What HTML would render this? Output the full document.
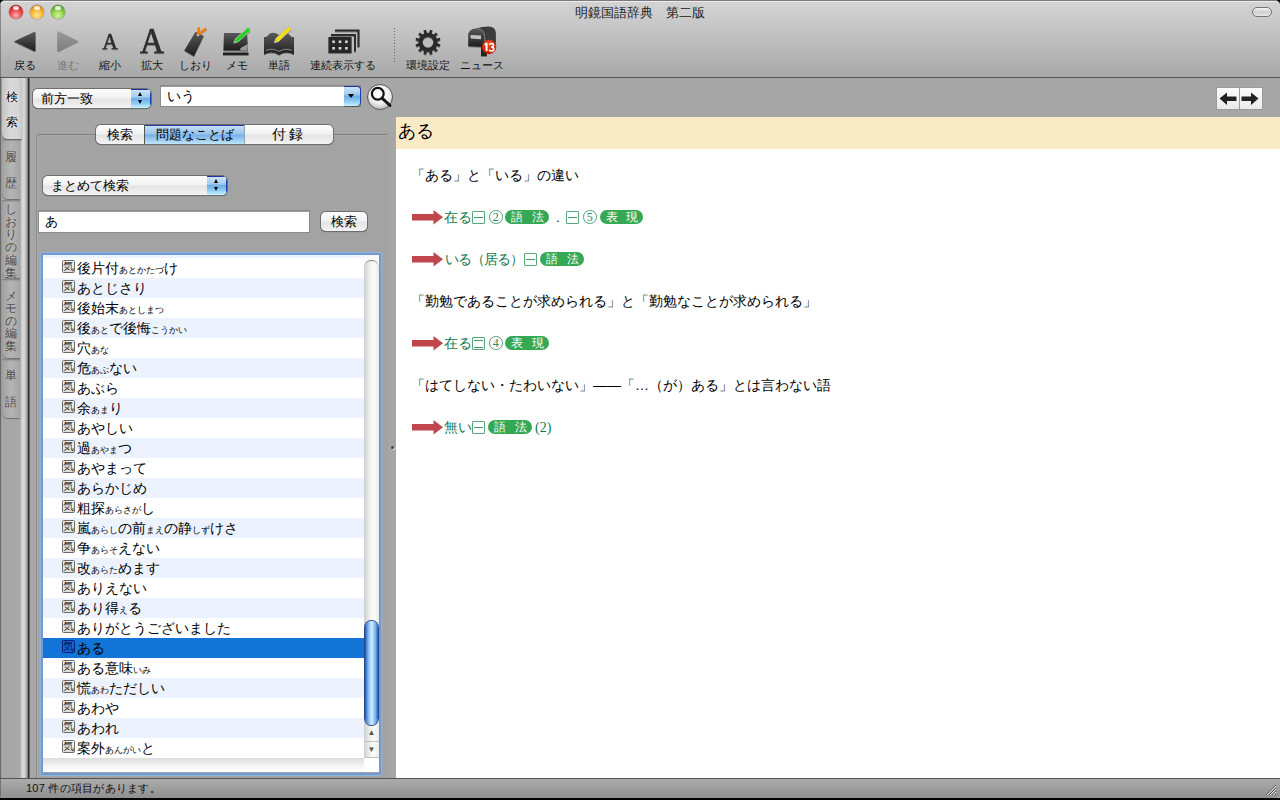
<!DOCTYPE html>
<html><head><meta charset="utf-8">
<style>
*{margin:0;padding:0;box-sizing:border-box}
html,body{width:1280px;height:800px;overflow:hidden;background:#000}
body{font-family:"Liberation Sans",sans-serif;position:relative;color:#000}
.a{position:absolute}
#win{position:absolute;left:0;top:0;width:1280px;height:798px;background:#a6a6a6;border-radius:5px 5px 0 0;overflow:hidden}
#tb{position:absolute;left:0;top:0;width:1280px;height:78px;background:linear-gradient(#d3d3d3,#cdcdcd 18%,#a8a8a8);border-top:1px solid #7c7c7c;border-bottom:1px solid #575757;border-radius:5px 5px 0 0;box-shadow:inset 0 1px 0 #ececec}
.tl{position:absolute;top:5px;width:14px;height:14px;border-radius:50%;box-shadow:0 0 0 0.5px rgba(0,0,0,.35)}
.tl::after{content:"";position:absolute;left:4px;top:1px;width:6px;height:4px;border-radius:50%;background:rgba(255,255,255,.85)}
.lbl{position:absolute;top:57px;font-size:11px;color:#111;white-space:nowrap;text-align:center}
#title{position:absolute;left:0;width:1280px;top:3px;text-align:center;font-size:13px;color:#222}
#vt{position:absolute;left:0;top:78px;width:29px;height:700px;background:linear-gradient(90deg,#8a8a8a,#a6a6a6 2px,#a8a8a8);border-right:1.5px solid #2a2a2a;box-shadow:1px 0 0 #6a6a6a}
.vtab{position:absolute;left:2px;width:18px;background:linear-gradient(90deg,#a2a2a2,#b4b4b4 50%,#a6a6a6);border-radius:0 0 0 6px;box-shadow:0 1px 1px #6e6e6e, inset 0 2px 2px -1px #7a7a7a}
.vtab span{display:block;font-size:12px;color:#4a4a4a;text-align:center;line-height:13px;text-shadow:0 0 2px #c4c4c4}
#status{position:absolute;left:0;top:778px;width:1280px;height:20px;background:linear-gradient(#acacac,#8f8f8f);border-top:1px solid #525252;border-radius:0 0 5px 5px}
#content{position:absolute;left:396px;top:117px;width:884px;height:661px;background:#fff}
#hdr{position:absolute;left:0;top:0;width:884px;height:32px;background:#faebc7}

.pop{position:absolute;height:20px;border-radius:5px;background:linear-gradient(#fdfdfd,#f2f2f2 45%,#e4e4e4 55%,#f4f4f4);box-shadow:0 0 0 1px #6e6e6e, 0 1px 1px #555;overflow:hidden}
.pop .t{position:absolute;left:8px;top:2px;font-size:13px;line-height:16px;color:#000;white-space:nowrap}
.pop .bl{position:absolute;right:0;top:0;width:20px;height:100%;background:linear-gradient(#d2e6f8,#a6cdef 40%,#6eaee6 52%,#8ccaf4 75%,#c9f6ff);box-shadow:inset 0 1px 0 #1f2f9c,inset -1px 0 0 #1f3fa8}
.arr{position:absolute;left:7px;width:0;height:0;border-left:2.5px solid transparent;border-right:2.5px solid transparent}
.fld{position:absolute;background:#fff;box-shadow:inset 0 1px 0 #9a9a9a, 0 0 0 1px #8c8c8c}
.fld .t{position:absolute;left:6px;top:2px;font-size:13px;line-height:16px;white-space:nowrap}
.row{position:absolute;left:0;width:321px;height:20px;background:#fff}
.row.b{background:#edf3fe}
.row.sel{background:#1174d6;color:#fff}
.ic{position:absolute;left:19px;top:2px;width:13px;height:13px;border:1px solid #6a6a6a;border-radius:1.5px;background:linear-gradient(#f6f6f6,#e2e2e2);font-size:11px;line-height:11px;text-align:center;color:#3c3c3c;overflow:hidden}
.row.sel .ic{background:#1466d4;border-color:#06207a;color:#061a60}
.rt{position:absolute;left:34px;top:1px;font-size:14px;line-height:19px;white-space:nowrap;color:#000}
.row.sel .rt{color:#000}
.rt small{font-size:9px}

.ln{position:absolute;left:15px;font-size:14px;line-height:18px;white-space:nowrap;color:#000}
.ar{position:absolute;left:15.5px;width:31px;height:15px}
.gr{position:absolute;font-size:13.5px;line-height:16px;color:#137a4f;white-space:nowrap}
.bx{position:absolute;width:13px;height:13px;border:1px solid #5aa77e;border-radius:1px;margin-top:-1px}
.bx::after{content:"";position:absolute;left:1px;right:1px;top:5px;height:1px;background:#4a9a70}
.bx.b2::after{top:2px;height:6px;background:none;border-top:1px solid #4a9a70;border-bottom:1px solid #4a9a70}
.ci{position:absolute;width:13.5px;height:13.5px;margin-top:-1.5px;border:1px solid #4fa27a;border-radius:50%;font-size:12px;line-height:12px;text-align:center;color:#2e8a5a;font-family:"Liberation Serif",serif}
.pl{position:absolute;height:14px;border-radius:7px;background:#34a853;color:#fff;font-size:12px;line-height:14px;text-align:left}
.pl i{position:absolute;font-style:normal;top:0}
</style></head><body>
<div id="win">
 <div id="tb">
  <div class="tl" style="left:9px;top:4px;background:radial-gradient(circle at 50% 75%,#ffb0b0,#e84848 45%,#c21d1d 80%,#8a1010)"></div>
  <div class="tl" style="left:30px;top:4px;background:radial-gradient(circle at 50% 75%,#ffe890,#f7b73a 45%,#e0871a 80%,#9a5a10)"></div>
  <div class="tl" style="left:51px;top:4px;background:radial-gradient(circle at 50% 75%,#d8f59a,#8ed04a 45%,#4c9e2a 80%,#2a6a14)"></div>
  
  <svg class="a" style="left:0;top:-1px" width="520" height="78" viewBox="0 0 520 78">
   <defs>
    <linearGradient id="gd" x1="0" y1="0" x2="0" y2="1"><stop offset="0" stop-color="#5a5a5a"/><stop offset="1" stop-color="#1e1e1e"/></linearGradient>
    <linearGradient id="gl" x1="0" y1="0" x2="0" y2="1"><stop offset="0" stop-color="#9a9a9a"/><stop offset="1" stop-color="#7d7d7d"/></linearGradient>
    <filter id="sh" x="-20%" y="-20%" width="140%" height="150%"><feDropShadow dx="0" dy="1" stdDeviation="0.6" flood-color="#000" flood-opacity="0.35"/></filter>
   </defs>
   <g filter="url(#sh)">
   <!-- back -->
   <path d="M14 41.5 L34 32 Q35.5 31.4 35.5 33 L35.5 50.2 Q35.5 51.8 34 51.1 Z" fill="url(#gd)"/>
   <!-- forward -->
   <path d="M78.5 41.2 L59 31.4 Q57.4 30.8 57.4 32.4 L57.4 50 Q57.4 51.6 59 50.9 Z" fill="url(#gl)"/>
   <!-- small A -->
   <text x="0" y="0" transform="translate(110 49.4) scale(0.92 1)" font-family="Liberation Serif" font-size="23.6" text-anchor="middle" fill="#2e2e2e" stroke="#2e2e2e" stroke-width="0.5">A</text>
   <!-- big A -->
   <text x="0" y="0" transform="translate(152 53.4) scale(0.93 1)" font-family="Liberation Serif" font-size="35.8" text-anchor="middle" fill="#2e2e2e" stroke="#2e2e2e" stroke-width="0.7">A</text>
   <!-- bookmark -->
   <path d="M195.5 31.7 L203.8 36 L194 56.3 L184.3 50.5 Z" fill="url(#gd)"/>
   <circle cx="198" cy="35" r="1.3" fill="#ccc"/>
   <path d="M198.8 28.2 L198.6 34 L205.4 29" stroke="#f07d0a" stroke-width="2.4" fill="none" stroke-linecap="round" stroke-linejoin="round"/>
   <!-- memo -->
   <path d="M224 33 L247 33 L248 50.5 L223.5 50.5 Z" fill="url(#gd)"/>
   <rect x="223" y="52.5" width="25.5" height="2.5" fill="#222"/>
   <path d="M240.5 48 L248 44 L247.5 50.5 L240 50.5 Z" fill="#9a9a9a"/>
   <path d="M233.8 43 L235.5 38.8 L247.7 27.8 Q249.8 26.5 250.3 30.8 L238.1 41.8 Z" fill="#1fd61f" stroke="#bdbdbd" stroke-width="0.9"/>
   <!-- book -->
   <path d="M264 37 L266.3 37 Q272 29.5 279 35 Q286 29.5 291.7 37 L294 37 L294 54.5 Q286 50.5 279 55 Q272 50.5 264 54.5 Z" fill="url(#gd)"/>
   <path d="M266 50.5 Q272 47.5 279 51.5 Q286 47.5 292 50.5" stroke="#8a8a8a" stroke-width="1" fill="none"/>
   <path d="M274.4 42.7 L275.9 38.5 L288.2 26.8 Q290.5 25.8 291 29.6 L278.7 41.4 Z" fill="#f6e000" stroke="#bdbdbd" stroke-width="0.9"/>
   <!-- cards -->
   <path d="M335 30.5 L358.5 30.5 L358.5 47" stroke="#2a2a2a" stroke-width="2" fill="none"/>
   <path d="M331 35 L355 35 L355 51.5" stroke="#2a2a2a" stroke-width="2" fill="none"/>
   <rect x="328.5" y="37" width="23" height="16" fill="#262626"/>
   <g fill="#d8d8d8"><rect x="332.3" y="40.5" width="2.6" height="2.6"/><rect x="338.7" y="40.5" width="2.6" height="2.6"/><rect x="345.1" y="40.5" width="2.6" height="2.6"/>
   <rect x="332.3" y="47" width="2.6" height="2.6"/><rect x="338.7" y="47" width="2.6" height="2.6"/><rect x="345.1" y="47" width="2.6" height="2.6"/></g>
   <!-- gear -->
   <g transform="translate(428 42.3)">
    <path id="gearp" fill-rule="evenodd" d="M0.00 -9.60 L1.15 -9.53 L1.97 -12.44 L4.52 -11.76 L3.77 -8.83 L4.80 -8.31 L5.76 -7.68 L7.93 -9.79 L9.79 -7.93 L7.68 -5.76 L8.31 -4.80 L8.83 -3.77 L11.76 -4.52 L12.44 -1.97 L9.53 -1.15 L9.60 -0.00 L9.53 1.15 L12.44 1.97 L11.76 4.52 L8.83 3.77 L8.31 4.80 L7.68 5.76 L9.79 7.93 L7.93 9.79 L5.76 7.68 L4.80 8.31 L3.77 8.83 L4.52 11.76 L1.97 12.44 L1.15 9.53 L-0.00 9.60 L-1.15 9.53 L-1.97 12.44 L-4.52 11.76 L-3.77 8.83 L-4.80 8.31 L-5.76 7.68 L-7.93 9.79 L-9.79 7.93 L-7.68 5.76 L-8.31 4.80 L-8.83 3.77 L-11.76 4.52 L-12.44 1.97 L-9.53 1.15 L-9.60 0.00 L-9.53 -1.15 L-12.44 -1.97 L-11.76 -4.52 L-8.83 -3.77 L-8.31 -4.80 L-7.68 -5.76 L-9.79 -7.93 L-7.93 -9.79 L-5.76 -7.68 L-4.80 -8.31 L-3.77 -8.83 L-4.52 -11.76 L-1.97 -12.44 L-1.15 -9.53 Z M5.4 0 A5.4 5.4 0 1 0 -5.4 0 A5.4 5.4 0 1 0 5.4 0 Z" fill="#2c2c2c"/>
   </g>
   <!-- mailbox -->
   <path d="M476 28.6 Q482 26.4 488.5 26.4 Q495.8 26.6 495.8 33 L495.8 45.8 L484 47 Z" fill="#3a3a3a"/>
   <path d="M468.3 35.5 Q468.3 29 476 28.6 Q484.3 28.6 484.3 36.5 L484.3 47 L468.3 46.2 Z" fill="url(#gd)"/>
   <path d="M477.5 28.7 Q484.6 29.5 484.8 36.5 L484.8 47" stroke="#8a8a8a" stroke-width="0.9" fill="none"/>
   <path d="M470.6 35 L481 35.6 L481 39.2 L470.6 38.6 Z" fill="#c4c4c4"/>
   <rect x="481" y="47" width="5.8" height="9" fill="#222"/>
   </g>
   <defs><radialGradient id="bg13" cx="50%" cy="30%" r="70%"><stop offset="0" stop-color="#f2501c"/><stop offset="1" stop-color="#c41a06"/></radialGradient></defs>
   <circle cx="489.1" cy="47" r="7.2" fill="url(#bg13)"/>
   <path d="M484.6 44.9 L486.6 43.5 L486.6 50.9" stroke="#fff" stroke-width="2" fill="none" stroke-linejoin="round"/><path d="M489.2 44.6 Q490.5 43.4 491.8 43.5 Q493.6 43.7 493.5 45.3 Q493.4 46.8 491.2 47.1 Q493.8 47.2 493.8 49.1 Q493.6 51.1 491.5 51 Q490 51 489 50" stroke="#fff" stroke-width="1.7" fill="none"/>
   <!-- separator -->
   <line x1="394.5" y1="28" x2="394.5" y2="62" stroke="#666" stroke-width="1" stroke-dasharray="1 2"/>
  </svg>
  <div id="title">明鏡国語辞典　第二版</div>
  <div class="lbl" style="left:14px">戻る</div>
  <div class="lbl" style="left:57px;color:#777">進む</div>
  <div class="lbl" style="left:99px">縮小</div>
  <div class="lbl" style="left:141px">拡大</div>
  <div class="lbl" style="left:179px">しおり</div>
  <div class="lbl" style="left:226px">メモ</div>
  <div class="lbl" style="left:268px">単語</div>
  <div class="lbl" style="left:310px">連続表示する</div>
  <div class="lbl" style="left:406px">環境設定</div>
  <div class="lbl" style="left:460px">ニュース</div>
 </div>
 <div id="vt">
  <div class="a" style="left:20px;top:0;width:7.5px;height:700px;background:linear-gradient(90deg,#b0b0b0,#dcdcdc 35%,#cdcdcd 65%,#7a7a7a)"></div>
  <div class="vtab" style="top:61px;height:60px"><span style="margin-top:11.5px">履</span><span style="margin-top:13.5px">歴</span></div>
  <div class="vtab" style="top:122px;height:78px;padding-top:3px;line-height:12.7px"><span style="line-height:12.7px">し</span><span style="line-height:12.7px">お</span><span style="line-height:12.7px">り</span><span style="line-height:12.7px">の</span><span style="line-height:12.7px">編</span><span style="line-height:12.7px">集</span></div>
  <div class="vtab" style="top:201px;height:79px;padding-top:10.5px"><span style="line-height:12.5px">メ</span><span style="line-height:12.5px">モ</span><span style="line-height:12.5px">の</span><span style="line-height:12.5px">編</span><span style="line-height:12.5px">集</span></div>
  <div class="vtab" style="top:281px;height:59px"><span style="margin-top:9.5px">単</span><span style="margin-top:14px">語</span></div>
  <div class="a" style="left:2px;top:0;width:20px;height:61px;border-radius:0 0 0 6px;background:linear-gradient(90deg,#c4c4c4,#d8d8d8 40%,#d6d6d6 80%,#c8c8c8);box-shadow:0 1px 1px #666"><span style="display:block;font-size:12px;line-height:14px;text-align:center;margin-top:12px;color:#000;text-shadow:0 0 1px #fff,0 0 2px #fff,0 0 2px #fff">検</span><span style="display:block;font-size:12px;line-height:14px;text-align:center;margin-top:11px;color:#000;text-shadow:0 0 1px #fff,0 0 2px #fff,0 0 2px #fff">索</span></div>
 </div>

 <div class="pop" style="left:33px;top:89px;width:118px;height:19px"><div class="t">前方一致</div><div class="bl"><div class="arr" style="top:3px;border-bottom:4px solid #000"></div><div class="arr" style="top:11px;border-top:4px solid #000"></div></div></div>
 <div class="fld" style="left:161px;top:86px;width:199px;height:20px"><div class="t" style="top:2px;font-size:14px">いう</div>
  <div class="a" style="right:-1px;top:0;width:17px;height:20px;border-radius:0 4px 4px 0;background:linear-gradient(#d2e6f8,#a6cdef 40%,#6eaee6 52%,#8ccaf4 75%,#c9f6ff);box-shadow:inset 0 1px 0 #1f2f9c,inset -1px 0 0 #1f3fa8,0 1px 0 #555"><div class="a" style="left:4px;top:7.5px;width:0;height:0;border-left:3px solid transparent;border-right:3px solid transparent;border-top:4.5px solid #000"></div></div></div>
 <svg class="a" style="left:365px;top:83px" width="30" height="30" viewBox="0 0 30 30">
  <defs><radialGradient id="mg" cx="50%" cy="35%" r="60%"><stop offset="0" stop-color="#fff"/><stop offset="0.7" stop-color="#eee"/><stop offset="1" stop-color="#c4c4c4"/></radialGradient></defs>
  <circle cx="15" cy="14" r="12.5" fill="url(#mg)" stroke="#555" stroke-width="1"/>
  <circle cx="12.8" cy="10.8" r="5.9" fill="none" stroke="#111" stroke-width="2.2"/>
  <path d="M17 15.2 L25 22.5" stroke="#1a1010" stroke-width="3" stroke-linecap="round"/>
 </svg>
 <!-- group box -->
 <div class="a" style="left:36px;top:134px;width:352px;height:660px;border:1px solid #8c8c8c;border-top-color:#7c7c7c;border-right-color:#a3a3a3;border-radius:4px 0 0 0;background:#a3a3a3;box-shadow:inset 1px 1px 0 #acacac"></div>
 <div class="a" id="seg" style="left:96px;top:125px;width:237px;height:19px;border-radius:5px;background:linear-gradient(#fdfdfd,#f2f2f2 45%,#e4e4e4 55%,#f4f4f4);box-shadow:0 0 0 1px #6e6e6e,0 1px 1px #555;overflow:hidden">
  <div class="a" style="left:0;top:0;width:48px;height:19px;font-size:13px;line-height:19px;text-align:center">検索</div>
  <div class="a" style="left:48px;top:0;width:101px;height:19px;background:linear-gradient(#cfe3f7,#9cc5ee 45%,#79b2ea 55%,#c0e6fd);border-left:1px solid #555;border-right:1px solid #8aa;box-shadow:inset 0 1px 0 #2a3aa0;font-size:13px;line-height:19px;text-align:center">問題なことば</div>
  <div class="a" style="left:149px;top:0;width:88px;height:19px;font-size:14px;line-height:19px;text-align:center;letter-spacing:3px">付録</div>
 </div>
 <div class="pop" style="left:43px;top:176px;width:184px;height:19px"><div class="t">まとめて検索</div><div class="bl"><div class="arr" style="top:3px;border-bottom:4px solid #000"></div><div class="arr" style="top:11px;border-top:4px solid #000"></div></div></div>
 <div class="fld" style="left:39px;top:211px;width:270px;height:21px"><div class="t" style="top:3px;font-size:13px">あ</div></div>
 <div class="a" style="left:321px;top:212px;width:46px;height:19px;border-radius:5px;background:linear-gradient(#fdfdfd,#f2f2f2 45%,#e4e4e4 55%,#f4f4f4);box-shadow:0 0 0 1px #6e6e6e,0 1px 1px #555;font-size:13px;line-height:19px;text-align:center">検索</div>
 <!-- list -->
 
 <div class="a" id="list" style="left:43px;top:254px;width:336px;height:518px;background:#fff;overflow:hidden">
  <div class="a" style="left:0;top:504px;width:321px;height:14px;background:linear-gradient(#dcdcdc,#f6f6f6 60%,#fff)"></div>
  <div class="row b" style="top:-16px"><div class="ic">気</div><div class="rt">後<small>あと</small>先<small>さき</small></div></div>
  <div class="row" style="top:4px"><div class="ic">気</div><div class="rt">後片付<small>あとかたづ</small>け</div></div>
  <div class="row b" style="top:24px"><div class="ic">気</div><div class="rt">あとじさり</div></div>
  <div class="row" style="top:44px"><div class="ic">気</div><div class="rt">後始末<small>あとしまつ</small></div></div>
  <div class="row b" style="top:64px"><div class="ic">気</div><div class="rt">後<small>あと</small>で後悔<small>こうかい</small></div></div>
  <div class="row" style="top:84px"><div class="ic">気</div><div class="rt">穴<small>あな</small></div></div>
  <div class="row b" style="top:104px"><div class="ic">気</div><div class="rt">危<small>あぶ</small>ない</div></div>
  <div class="row" style="top:124px"><div class="ic">気</div><div class="rt">あぶら</div></div>
  <div class="row b" style="top:144px"><div class="ic">気</div><div class="rt">余<small>あま</small>り</div></div>
  <div class="row" style="top:164px"><div class="ic">気</div><div class="rt">あやしい</div></div>
  <div class="row b" style="top:184px"><div class="ic">気</div><div class="rt">過<small>あやま</small>つ</div></div>
  <div class="row" style="top:204px"><div class="ic">気</div><div class="rt">あやまって</div></div>
  <div class="row b" style="top:224px"><div class="ic">気</div><div class="rt">あらかじめ</div></div>
  <div class="row" style="top:244px"><div class="ic">気</div><div class="rt">粗探<small>あらさが</small>し</div></div>
  <div class="row b" style="top:264px"><div class="ic">気</div><div class="rt">嵐<small>あらし</small>の前<small>まえ</small>の静<small>しず</small>けさ</div></div>
  <div class="row" style="top:284px"><div class="ic">気</div><div class="rt">争<small>あらそ</small>えない</div></div>
  <div class="row b" style="top:304px"><div class="ic">気</div><div class="rt">改<small>あらた</small>めます</div></div>
  <div class="row" style="top:324px"><div class="ic">気</div><div class="rt">ありえない</div></div>
  <div class="row b" style="top:344px"><div class="ic">気</div><div class="rt">あり得<small>え</small>る</div></div>
  <div class="row" style="top:364px"><div class="ic">気</div><div class="rt">ありがとうございました</div></div>
  <div class="row b sel" style="top:384px"><div class="ic">気</div><div class="rt">ある</div></div>
  <div class="row" style="top:404px"><div class="ic">気</div><div class="rt">ある意味<small>いみ</small></div></div>
  <div class="row b" style="top:424px"><div class="ic">気</div><div class="rt">慌<small>あわ</small>ただしい</div></div>
  <div class="row" style="top:444px"><div class="ic">気</div><div class="rt">あわや</div></div>
  <div class="row b" style="top:464px"><div class="ic">気</div><div class="rt">あわれ</div></div>
  <div class="row" style="top:484px"><div class="ic">気</div><div class="rt">案外<small>あんがい</small>と</div></div>
  <div class="a" style="left:321px;top:0;width:15px;height:504px;background:#f8f8f8"></div><div class="a" style="left:321px;top:5.5px;width:15px;height:498.5px;border-radius:7px 7px 0 0;background:linear-gradient(90deg,#cfcfcf,#f0f0f0 40%,#fbfbfb 65%,#f2f2f2 85%,#e6e6e6);box-shadow:inset 0 2px 1px -1px #8a8a8a"></div>
  <div class="a" style="left:322px;top:367px;width:13px;height:104px;border-radius:7px;background:linear-gradient(90deg,#1f55b8,#7fb6f0 25%,#cfe9ff 50%,#8cc4f6 75%,#2760c0);box-shadow:0 0 0 1px #24478e"></div>
  <div class="a" style="left:321px;top:471px;width:15px;height:16px;font-size:8px;line-height:16px;text-align:center;color:#555">▲</div>
  <div class="a" style="left:321px;top:487px;width:15px;height:17px;border-top:1px solid #c4c4c4;border-bottom:1px solid #c4c4c4;font-size:8px;line-height:15px;text-align:center;color:#555">▼</div>
 </div>

 <div class="a" style="left:41px;top:253px;width:340px;height:522px;border:2px solid #6f9ad2;border-radius:2px;box-shadow:0 0 1px 0.5px #8fb3e0"></div>
 <div class="a" style="left:391px;top:446px;width:3px;height:3px;border-radius:50%;background:#444;box-shadow:1px 1px 0 #ddd"></div>
 <div class="a" style="left:1216px;top:87px;width:47px;height:23px;border:1px solid #9a9a9a;background:linear-gradient(#fbfbfb,#eaeaea)">
  <div class="a" style="left:22px;top:0;width:1px;height:21px;background:#9a9a9a"></div>
  <svg class="a" style="left:0;top:0" width="44" height="21" viewBox="0 0 44 21"><path d="M2.5 10.5 L10 4.5 L10 8.5 L19.5 8.5 L19.5 13 L10 13 L10 17 Z" fill="#222"/><path d="M41.5 10.5 L34 4.5 L34 8.5 L24.5 8.5 L24.5 13 L34 13 L34 17 Z" fill="#222"/></svg>
 </div>
 <div class="a" style="left:1252px;top:7px;width:20px;height:10px;border-radius:5px;border:1px solid #777;background:linear-gradient(#f4f4f4,#cfcfcf 50%,#e8e8e8)"></div>
 <div id="content">
  <div id="hdr"></div>
  <div class="a" style="left:2px;top:3px;font-size:18px;line-height:22px">ある</div>
  <div class="ln" style="top:49px">「ある」と「いる」の違い</div>
  <svg class="ar" style="top:93px" viewBox="0 0 31 15"><path d="M0 4 L21.5 4 L21.5 0 L31 7.3 L21.5 14.5 L21.5 10.5 L0 10.5 Z" fill="#c0464b"/></svg>
  <div class="gr" style="left:48px;top:93px">在る</div>
  <div class="bx" style="left:76px;top:94.5px"></div>
  <div class="ci" style="left:93px;top:94.5px">2</div>
  <div class="pl" style="left:109px;top:93px;width:44px"><i style="left:6px">語</i><i style="right:5px">法</i></div>
  <div class="a" style="left:160px;top:93px;font-size:13px;line-height:16px;color:#111">.</div>
  <div class="bx" style="left:170px;top:94.5px"></div>
  <div class="ci" style="left:187px;top:94.5px">5</div>
  <div class="pl" style="left:204px;top:93px;width:43px"><i style="left:6px">表</i><i style="right:5px">現</i></div>
  <svg class="ar" style="top:135px" viewBox="0 0 31 15"><path d="M0 4 L21.5 4 L21.5 0 L31 7.3 L21.5 14.5 L21.5 10.5 L0 10.5 Z" fill="#c0464b"/></svg>
  <div class="gr" style="left:49px;top:135px;letter-spacing:-1px">いる（居る）</div>
  <div class="bx" style="left:128px;top:136.5px"></div>
  <div class="pl" style="left:144px;top:135px;width:44px"><i style="left:6px">語</i><i style="right:5px">法</i></div>
  <div class="ln" style="top:175px">「勤勉であることが求められる」と「勤勉なことが求められる」</div>
  <svg class="ar" style="top:219px" viewBox="0 0 31 15"><path d="M0 4 L21.5 4 L21.5 0 L31 7.3 L21.5 14.5 L21.5 10.5 L0 10.5 Z" fill="#c0464b"/></svg>
  <div class="gr" style="left:48px;top:219px">在る</div>
  <div class="bx b2" style="left:76px;top:220.5px"></div>
  <div class="ci" style="left:93px;top:220.5px">4</div>
  <div class="pl" style="left:109px;top:219px;width:44px"><i style="left:6px">表</i><i style="right:5px">現</i></div>
  <div class="ln" style="top:259px">「はてしない・たわいない」――「…（が）ある」とは言わない語</div>
  <svg class="ar" style="top:303px" viewBox="0 0 31 15"><path d="M0 4 L21.5 4 L21.5 0 L31 7.3 L21.5 14.5 L21.5 10.5 L0 10.5 Z" fill="#c0464b"/></svg>
  <div class="gr" style="left:48px;top:303px">無い</div>
  <div class="bx" style="left:76px;top:304.5px"></div>
  <div class="pl" style="left:92px;top:303px;width:44px"><i style="left:6px">語</i><i style="right:5px">法</i></div>
  <div class="gr" style="left:139px;top:303px;font-family:'Liberation Serif',serif;font-size:14px">(2)</div>

 </div>
 <div class="a" style="left:0;top:0;width:1px;height:798px;background:rgba(60,60,60,0.45);z-index:5"></div>
  <div id="status"><div class="a" style="left:26px;top:2px;font-size:11px;letter-spacing:0.25px;line-height:14px;color:#111">107 件の項目があります。</div>
  <svg class="a" style="left:1265px;top:5px" width="12" height="12" viewBox="0 0 12 12"><path d="M11 1 L1 11 M11 4 L4 11 M11 7 L7 11 M11 10 L10 11" stroke="#555" stroke-width="1"/><path d="M11 2 L2 11 M11 5 L5 11 M11 8 L8 11" stroke="#e8e8e8" stroke-width="1"/></svg></div>
</div>
</body></html>
